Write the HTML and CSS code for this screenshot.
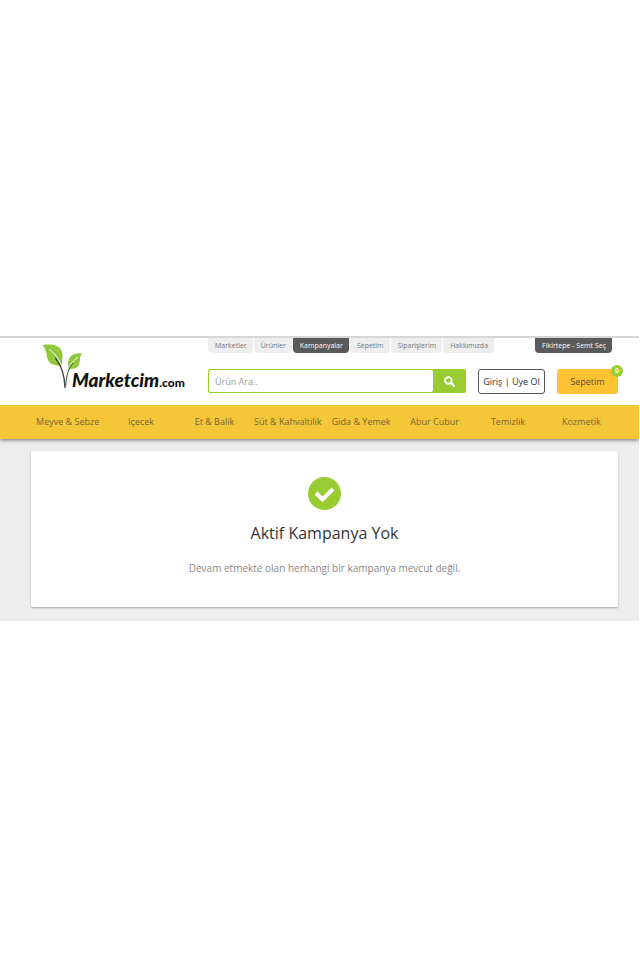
FILE: index.html
```html
<!DOCTYPE html>
<html lang="tr">
<head>
<meta charset="utf-8">
<meta name="viewport" content="width=device-width, initial-scale=1">
<title>Marketcim.com</title>
<link rel="stylesheet" href="styles.css">
</head>
<body>
<div class="site">
  <header class="header">
    <a class="logo" href="#">
      <svg class="logo-mark" viewBox="0 0 126 135" aria-hidden="true">
        <path fill="#92c83e" d="M1 3C24 0 46 2 56 16C66 30 60 46 59 68C50 62 28 66 19 50C12 36 15 17 1 3Z"/>
        <path fill="#92c83e" d="M120 28C97 27 83 34 80 48C77 58 80 66 78 75C90 73 105 76 111 62C115 51 112 39 120 28Z"/>
        <path fill="none" stroke="#fff" stroke-width="3" d="M22 17C38 27 50 43 58 66M108 39C94 49 86 60 80 74"/>
        <path fill="none" stroke="#444" stroke-width="4" d="M40 42C56 62 68 88 69 132"/>
        <path fill="none" stroke="#444" stroke-width="3" d="M93 57C82 69 73 90 71 126"/>
      </svg>
      <span class="logo-name">Marketcim<span class="logo-domain">.com</span></span>
    </a>
    <div class="header-main">
      <nav class="tabs" aria-label="Site">
        <a class="tab" href="#">Marketler</a>
        <a class="tab" href="#">Ürünler</a>
        <a class="tab tab-dark" href="#" aria-current="page">Kampanyalar</a>
        <a class="tab" href="#">Sepetim</a>
        <a class="tab" href="#">Siparişlerim</a>
        <a class="tab" href="#">Hakkımızda</a>
        <a class="tab tab-dark tab-location" href="#">Fikirtepe - Semt Seç</a>
      </nav>
      <div class="actions">
        <form class="search">
          <input class="search-input" type="search" placeholder="Ürün Ara.." aria-label="Ürün Ara">
          <button class="search-button" type="button" aria-label="Ara">
            <svg class="search-icon" viewBox="0 0 20 20" aria-hidden="true">
              <circle cx="8" cy="8" r="6" fill="none" stroke="#fff" stroke-width="3.4"/>
              <path d="M12.5 12.5L18 18" stroke="#fff" stroke-width="4" stroke-linecap="round"/>
            </svg>
          </button>
        </form>
        <button class="button login" type="button">Giriş | Üye Ol</button>
        <button class="button cart" type="button">Sepetim<span class="badge">0</span></button>
      </div>
    </div>
  </header>
  <nav class="categories" aria-label="Kategoriler">
    <a class="category" href="#">Meyve &amp; Sebze</a>
    <a class="category" href="#">Içecek</a>
    <a class="category" href="#">Et &amp; Balik</a>
    <a class="category" href="#">Süt &amp; Kahvaltilik</a>
    <a class="category" href="#">Gida &amp; Yemek</a>
    <a class="category" href="#">Abur Cubur</a>
    <a class="category" href="#">Temizlik</a>
    <a class="category" href="#">Kozmetik</a>
  </nav>
  <main class="content">
    <section class="card">
      <svg class="check" viewBox="0 0 33 33" aria-hidden="true">
        <circle cx="16.5" cy="16.5" r="16.5" fill="#9c3"/>
        <path d="M8 16L14.5 22.500L25 12" fill="none" stroke="#fff" stroke-width="4"/>
      </svg>
      <h1 class="title">Aktif Kampanya Yok</h1>
      <p class="message">Devam etmekte olan herhangi bir kampanya mevcut değil.</p>
    </section>
  </main>
</div>
</body>
</html>
```
FILE: styles.css
```css
* {
  box-sizing: border-box;
}

body {
  display: flex;
  flex-direction: column;
  justify-content: center;
  min-height: 100vh;
  margin: 0;
  padding-bottom: 3px;
  background: #fff;
  font-family: "Open Sans", sans-serif;
}

a {
  color: inherit;
  text-decoration: none;
}

button,
input {
  margin: 0;
  font-family: inherit;
}

.site {
  margin-right: 1px;
  border-top: 2px solid #d6d6d6;
}

.header {
  display: flex;
  padding: 0 21px 10px 31px;
}

.logo {
  display: flex;
  flex: none;
  align-items: flex-start;
  width: 177px;
  padding: 6px 0 0 11px;
}

.logo-mark {
  flex: none;
  width: 42px;
  height: 45px;
}

.logo-name {
  margin: 24px 0 0 -12px;
  color: #111;
  font-family: Lato, sans-serif;
  font-size: 19px;
  font-style: italic;
  font-weight: 900;
  line-height: 24px;
  white-space: nowrap;
}

.logo-domain {
  font-size: 12px;
  font-style: normal;
}

.header-main {
  flex: 1;
  min-width: 0;
}

.tabs {
  display: flex;
  gap: 1px;
  padding-right: 6px;
}

.tab {
  padding: 0 6px 0 7px;
  border-radius: 0 0 4px 4px;
  background: #eee;
  color: #777;
  font-size: 7px;
  line-height: 15px;
  white-space: nowrap;
}

.tab-dark {
  background: #5a5a5a;
  color: #fff;
  font-weight: 500;
}

.tab-location {
  margin-left: auto;
}

.actions {
  display: flex;
  gap: 12px;
  margin-top: 16px;
}

.search {
  display: flex;
  flex: 1;
  min-width: 0;
  height: 24px;
  border: 1px solid #9c3;
  border-radius: 2px;
  background: #9c3;
}

.search-input {
  flex: 1;
  min-width: 0;
  padding: 0 6px;
  border: 0;
  border-radius: 2px;
  background: #fff;
  color: #555;
  font-size: 9px;
}

.search-input::placeholder {
  color: #999;
}

.search-button {
  display: flex;
  align-items: center;
  justify-content: center;
  width: 32px;
  padding: 0;
  border: 0;
  background: #9c3;
}

.search-icon {
  width: 11px;
  height: 11px;
}

.button {
  height: 25px;
  padding: 0;
  border-radius: 3px;
  font-size: 9px;
  white-space: nowrap;
}

.login {
  width: 67px;
  border: 1px solid #555;
  background: #fff;
  color: #333;
}

.cart {
  position: relative;
  width: 61px;
  border: 0;
  background: #ffc233;
  color: #554a35;
}

.badge {
  position: absolute;
  top: -4px;
  right: -5px;
  width: 12px;
  height: 12px;
  border-radius: 50%;
  background: #9c3;
  color: #fff;
  font-size: 7px;
  font-weight: 700;
  line-height: 12px;
}

.categories {
  position: relative;
  display: grid;
  grid-template-columns: repeat(8, 1fr);
  padding: 0 21px 0 31px;
  background: #f5c637;
  box-shadow: 0 1px 4px rgba(0, 0, 0, 0.55);
  clip-path: inset(0 0 -8px 0);
}

.category {
  color: #766533;
  font-size: 9px;
  line-height: 34px;
  text-align: center;
  white-space: nowrap;
}

.content {
  padding: 12px 21px 14px 31px;
  background: #ededed;
}

.card {
  display: flex;
  flex-direction: column;
  align-items: center;
  padding: 26px 12px 31px;
  border-radius: 1px;
  background: #fff;
  box-shadow: 0 1px 2px rgba(0, 0, 0, 0.3);
  text-align: center;
}

.check {
  width: 33px;
  height: 33px;
}

.title {
  margin: 11px 0 0;
  color: #333;
  font-size: 16px;
  font-weight: 400;
  line-height: 24px;
}

.message {
  margin: 15px 0 0;
  color: #888;
  font-size: 10px;
  line-height: 16px;
}
```
